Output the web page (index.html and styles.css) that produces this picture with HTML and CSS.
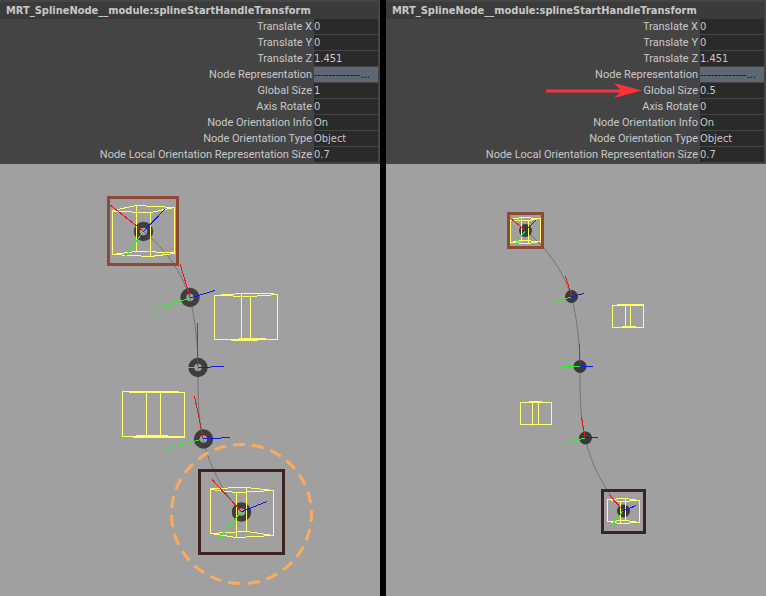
FILE: index.html
```
<!DOCTYPE html>
<html lang="en">
<head>
<meta charset="utf-8">
<title>Spline node global size</title>
<link rel="stylesheet" href="styles.css">
</head>
<body>
<main class="compare">
  <section class="pane">
    <form class="channels">
      <h2 class="title">MRT_SplineNode__module:splineStartHandleTransform</h2>
      <div class="row"><label for="a1">Translate X</label><input id="a1" value="0"></div>
      <div class="row"><label for="a2">Translate Y</label><input id="a2" value="0"></div>
      <div class="row"><label for="a3">Translate Z</label><input id="a3" value="1.451"></div>
      <div class="row"><label for="a4">Node Representation</label><input id="a4" class="divider" value="-------------..."></div>
      <div class="row"><label for="a5">Global Size</label><input id="a5" value="1"></div>
      <div class="row"><label for="a6">Axis Rotate</label><input id="a6" value="0"></div>
      <div class="row"><label for="a7">Node Orientation Info</label><input id="a7" value="On"></div>
      <div class="row"><label for="a8">Node Orientation Type</label><input id="a8" value="Object"></div>
      <div class="row"><label for="a9">Node Local Orientation Representation Size</label><input id="a9" value="0.7"></div>
    </form>
    <svg class="view" viewBox="0 164 380 432" preserveAspectRatio="xMinYMin meet">
      <path class="curve" d="M143 231C165 249 181 270 190 298C195 318 198 345 198 367C198 395 198 418 203 439C209 465 223 493 241 512"/>
      <g class="ring">
        <circle cx="143.5" cy="231.5" r="6.700"/><circle cx="190" cy="297.5" r="6.700"/><circle cx="198" cy="367.5" r="6.700"/><circle cx="203.500" cy="439" r="6.700"/><circle cx="241.500" cy="512" r="6.700"/>
      </g>
      <g class="cage">
        <path d="M112.500 210.500V254.500M136.500 205.500V251.500M150.500 212.500V256.500M174.500 207.500V253.500M112.500 210.500L136.500 205.500L174.500 207.500L150.500 212.500L112.500 211.500M112.500 254.500L136.500 251.500L174.500 252.500M112.500 254.500L150.500 256.500L174.500 253.500"/>
        <path d="M214.500 295.500V339.500H277.500V294.500M241.500 293.500V339.500M250.500 296.500V340.500M214.500 295.500L241.500 293.500H269.500L277.500 294.500L250.500 296.500L214.500 295.500M231 340.500H258M239 338.500H266"/>
        <path d="M122.500 391.500V436.500H184.500M184.500 392.500V437.500H133M146.500 391.500V436.500M160.500 392.500V437.500M122 391.500H179M129 392.500H185M136 435.500H168"/>
        <path d="M210.500 488.500V533.500M236.500 492.500V537.500M246.500 487.500V531.500M273.500 490.500V535.500M210.500 488.500L246.500 487.500L273.500 490.500L236.500 492.500L210.500 489.500M210.500 533.500L246.500 531.500L273.500 535.500L236.500 537.500Z"/>
      </g>
      <path class="axis red" d="M109 204L143 231M180 264L190 297M197.500 323V366M194.500 396L203 438M212 479.500L241 511"/>
      <path class="axis green" d="M143 232L125 257M190 298L155 309M198 367.500H161M203 439L167 448.500M241 512L217.500 540.500"/>
      <path class="axis blue" d="M143 232L165 209M190 298L215 290.500M198 367.500L224 366.500M203 439L230 437.500M241 512L267 501.500"/>
      <rect class="mark start" x="108.500" y="197.500" width="69" height="67"/>
      <rect class="mark end" x="199.500" y="470.500" width="84" height="83"/>
      <path class="halo" d="M240 583.500A69.500 69.500 0 0 1 242 444.500A69.500 69.500 0 0 1 242 583.500"/>
    </svg>
  </section>
  <section class="pane">
    <form class="channels">
      <h2 class="title">MRT_SplineNode__module:splineStartHandleTransform</h2>
      <div class="row"><label for="b1">Translate X</label><input id="b1" value="0"></div>
      <div class="row"><label for="b2">Translate Y</label><input id="b2" value="0"></div>
      <div class="row"><label for="b3">Translate Z</label><input id="b3" value="1.451"></div>
      <div class="row"><label for="b4">Node Representation</label><input id="b4" class="divider" value="-------------..."></div>
      <div class="row"><label for="b5"><svg class="arrow" viewBox="0 0 98 16"><path d="M0 6.500H74L68 0L96 7.500L68 15L74 9.500H0Z"/></svg>Global Size</label><input id="b5" value="0.5"></div>
      <div class="row"><label for="b6">Axis Rotate</label><input id="b6" value="0"></div>
      <div class="row"><label for="b7">Node Orientation Info</label><input id="b7" value="On"></div>
      <div class="row"><label for="b8">Node Orientation Type</label><input id="b8" value="Object"></div>
      <div class="row"><label for="b9">Node Local Orientation Representation Size</label><input id="b9" value="0.7"></div>
    </form>
    <svg class="view" viewBox="386 164 380 432" preserveAspectRatio="xMinYMin meet">
      <path class="curve" d="M525 230C547 248 563 270 571.500 297C577 318 580 345 580 366C580 395 580 416 585 438C591 464 605 492 623 510"/>
      <g class="dot">
        <circle cx="525.500" cy="230.500" r="6.500"/><circle cx="571.500" cy="296.500" r="6.500"/><circle cx="580" cy="366.500" r="6.500"/><circle cx="585.500" cy="438" r="6.500"/><circle cx="623.500" cy="511" r="6.500"/>
      </g>
      <g class="cage">
        <path d="M510.500 219.500V242.500M521.500 217.500V241.500M528.500 220.500V243.500M540.500 218.500V242.500M510 219.500L521.500 217.500L540.500 218.500L528.500 220.500L510 220.500M510 242.500L521.500 240.500L540.500 241.500L528.500 243.500L510 242.500"/>
        <path d="M612.500 305.500V327.500H643.500V304.500M625.500 304.500V327.500M630.500 305.500V327.500M612 305.500H643M617 304.500H644M622 326.500H636"/>
        <path d="M520.500 402.500V424.500H551.500V402.500ZM532.500 402.500V426M538.500 402.500V424.500M529 401.500H542"/>
        <path d="M607.500 499.500V521.500M620.500 501.500V523.500M625.500 498.500V520.500M639.500 500.500V522.500M607.500 499.500L625.500 498.500L639.500 500.500L620.500 501.500L607.500 499.500M607.500 521.500L625.500 520.500L639.500 522.500L620.500 523.500Z"/>
      </g>
      <path class="axis red" d="M510 218L525 230M565.500 276L571.500 296M579.500 344V362M581.500 417L585 437M609.500 495.500L623 510"/>
      <path class="axis green" d="M525 231L516 244M571 297L555 302.500M580 366.500H562M585 438L568 442.500M623 511L612 525"/>
      <path class="axis blue" d="M525 231L536 220M571 297L584 293.500M580 366.500H593M585 437.500H598M623 511L636 505.500"/>
      <rect class="mark start" x="508.500" y="213.500" width="34" height="34"/>
      <rect class="mark end" x="602.500" y="490.500" width="42" height="42"/>
    </svg>
  </section>
</main>
</body>
</html>
```
FILE: styles.css
```
* { box-sizing: border-box; }

body {
  margin: 0;
  background: #000;
  color: #c8c8c8;
  font: 11px/16px Roboto, sans-serif;
}

.compare {
  display: grid;
  grid-template-columns: 1fr 1fr;
  gap: 6px;
  min-height: 100vh;
}

.pane {
  background: #a0a0a0;
}

.channels {
  padding: 2px 2px 1px 0;
  background: #444;
}

.title {
  margin: 0;
  padding-left: 6px;
  background: #3b3b3b;
  font-family: "DejaVu Sans Condensed", "DejaVu Sans", sans-serif;
  font-size: 11px;
  line-height: 17px;
  font-weight: bold;
}

.row {
  display: grid;
  grid-template-columns: 1fr 64px;
  column-gap: 2px;
  height: 16px;
}

label {
  text-align: right;
  white-space: nowrap;
}

input {
  width: 100%;
  height: 15px;
  padding: 0;
  border: 0;
  background: #2a2a2a;
  color: #c8c8c8;
  font: 11px "DejaVu Sans Condensed", "DejaVu Sans", sans-serif;
}

.divider {
  background: #5d6874;
  color: #111;
}

.arrow {
  position: absolute;
  width: 98px;
  height: 16px;
  margin-left: -98px;
}

.arrow path { fill: #fa3237; }

.view {
  display: block;
  width: 100%;
}

.curve { fill: none; stroke: #747474; }

.ring circle { fill: none; stroke: #3e3e3e; stroke-width: 6px; }

.dot circle { fill: #3a3a3a; }

.cage path {
  fill: none;
  stroke: #ffff6a;
  shape-rendering: crispEdges;
}

.axis { fill: none; shape-rendering: crispEdges; }
.red { stroke: #f0101c; }
.green { stroke: #20f820; }
.blue { stroke: #1018f0; }

.mark { fill: none; stroke-width: 3px; }
.start { stroke: #8e4a36; }
.end { stroke: #3e2421; }

.halo {
  fill: none;
  stroke: #fbab5c;
  stroke-width: 3px;
  stroke-dasharray: 12 7;
}
```
